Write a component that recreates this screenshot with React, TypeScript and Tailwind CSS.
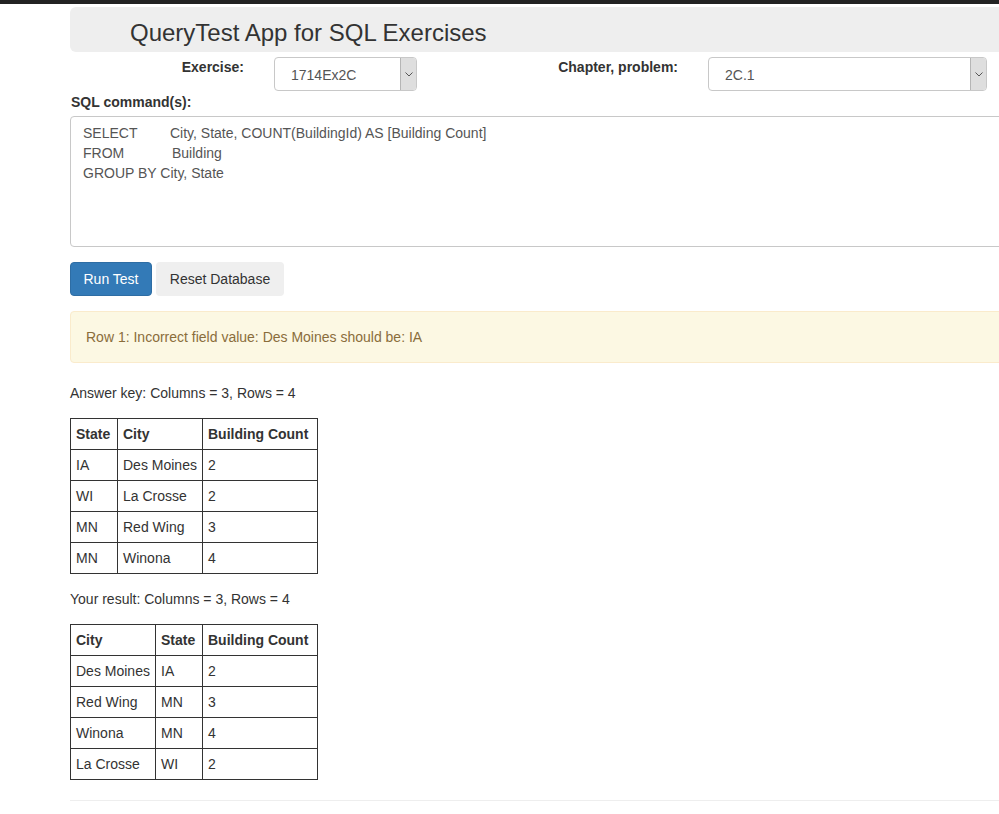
import React from "react";

const font = { fontFamily: '"Liberation Sans", Arial, sans-serif' };

function Select({ value, width }: { value: string; width: string }) {
  return (
    <div className={`flex h-[34px] ${width} rounded-[4px] border border-[#c8c8c8] bg-white overflow-hidden`}>
      <div className="flex-1 pl-[16px] pt-[7px] text-[14px] leading-[20px] text-[#555]">{value}</div>
      <div className="flex w-[16px] items-center justify-center border-l border-[#b5b5b5] bg-[#dedede]">
        <svg width="8" height="5" viewBox="0 0 8 5">
          <path d="M0.5 0.5 L4 4 L7.5 0.5" fill="none" stroke="#555" strokeWidth="1" />
        </svg>
      </div>
    </div>
  );
}

function Table({ headers, rows, widths }: { headers: string[]; rows: string[][]; widths: string[] }) {
  return (
    <table className="border-collapse text-[14px] leading-[20px] text-[#333]">
      <thead>
        <tr>
          {headers.map((h, i) => (
            <th key={i} className={`border border-[#333] px-[5px] py-[5px] text-left font-bold ${widths[i]}`}>
              {h}
            </th>
          ))}
        </tr>
      </thead>
      <tbody>
        {rows.map((r, ri) => (
          <tr key={ri}>
            {r.map((c, ci) => (
              <td key={ci} className="border border-[#333] px-[5px] py-[5px]">
                {c}
              </td>
            ))}
          </tr>
        ))}
      </tbody>
    </table>
  );
}

export default function App() {
  return (
    <div className="w-[999px] h-[814px] overflow-hidden bg-white text-[14px] text-[#333]" style={font}>
      <div className="h-[4px] bg-[#222]" />
      <div className="ml-[70px] w-[1100px] pt-[3px]">
        <div className="h-[45px] rounded-[6px] bg-[#eeeeee] pl-[60px] pt-[11px]">
          <h1 className="text-[24px] leading-[30px] text-[#333]">QueryTest App for SQL Exercises</h1>
        </div>

        <div className="mt-[5px] flex items-start">
          <div className="w-[174px] pt-0 text-right font-bold">Exercise:</div>
          <div className="ml-[30px]">
            <Select value="1714Ex2C" width="w-[143px]" />
          </div>
          <div className="w-[261px] pt-0 text-right font-bold">Chapter, problem:</div>
          <div className="ml-[30px]">
            <Select value="2C.1" width="w-[279px]" />
          </div>
        </div>

        <div className="mt-[1px] pl-[1px] font-bold leading-[20px]">SQL command(s):</div>

        <div className="mt-[4px] h-[131px] rounded-[4px] border border-[#c8c8c8] px-[12px] pt-[6px] leading-[20px] text-[#555]">
          <div>
            <span className="inline-block w-[87px]">SELECT</span>City, State, COUNT(BuildingId) AS [Building Count]
          </div>
          <div>
            <span className="inline-block w-[89px]">FROM</span>Building
          </div>
          <div>GROUP BY City, State</div>
        </div>

        <div className="mt-[15px] flex gap-[4px]">
          <button className="h-[34px] w-[82px] rounded-[4px] border border-[#2e6da4] bg-[#337ab7] text-[14px] text-white">
            Run Test
          </button>
          <button className="h-[34px] w-[128px] rounded-[4px] bg-[#efefef] text-[14px] text-[#333]">
            Reset Database
          </button>
        </div>

        <div className="mt-[15px] h-[52px] rounded-[4px] border border-[#faebcc] bg-[#fcf8e3] px-[15px] pt-[15px] leading-[20px] text-[#8a6d3b]">
          Row 1: Incorrect field value: Des Moines should be: IA
        </div>

        <div className="mt-[20px] leading-[20px]">Answer key: Columns = 3, Rows = 4</div>
        <div className="mt-[15px]">
          <Table
            headers={["State", "City", "Building Count"]}
            widths={["w-[47px]", "w-[85px]", "w-[115px]"]}
            rows={[
              ["IA", "Des Moines", "2"],
              ["WI", "La Crosse", "2"],
              ["MN", "Red Wing", "3"],
              ["MN", "Winona", "4"],
            ]}
          />
        </div>

        <div className="mt-[15px] leading-[20px]">Your result: Columns = 3, Rows = 4</div>
        <div className="mt-[15px]">
          <Table
            headers={["City", "State", "Building Count"]}
            widths={["w-[85px]", "w-[47px]", "w-[115px]"]}
            rows={[
              ["Des Moines", "IA", "2"],
              ["Red Wing", "MN", "3"],
              ["Winona", "MN", "4"],
              ["La Crosse", "WI", "2"],
            ]}
          />
        </div>

        <hr className="mt-[20px] border-t border-[#eeeeee]" />
      </div>
    </div>
  );
}
